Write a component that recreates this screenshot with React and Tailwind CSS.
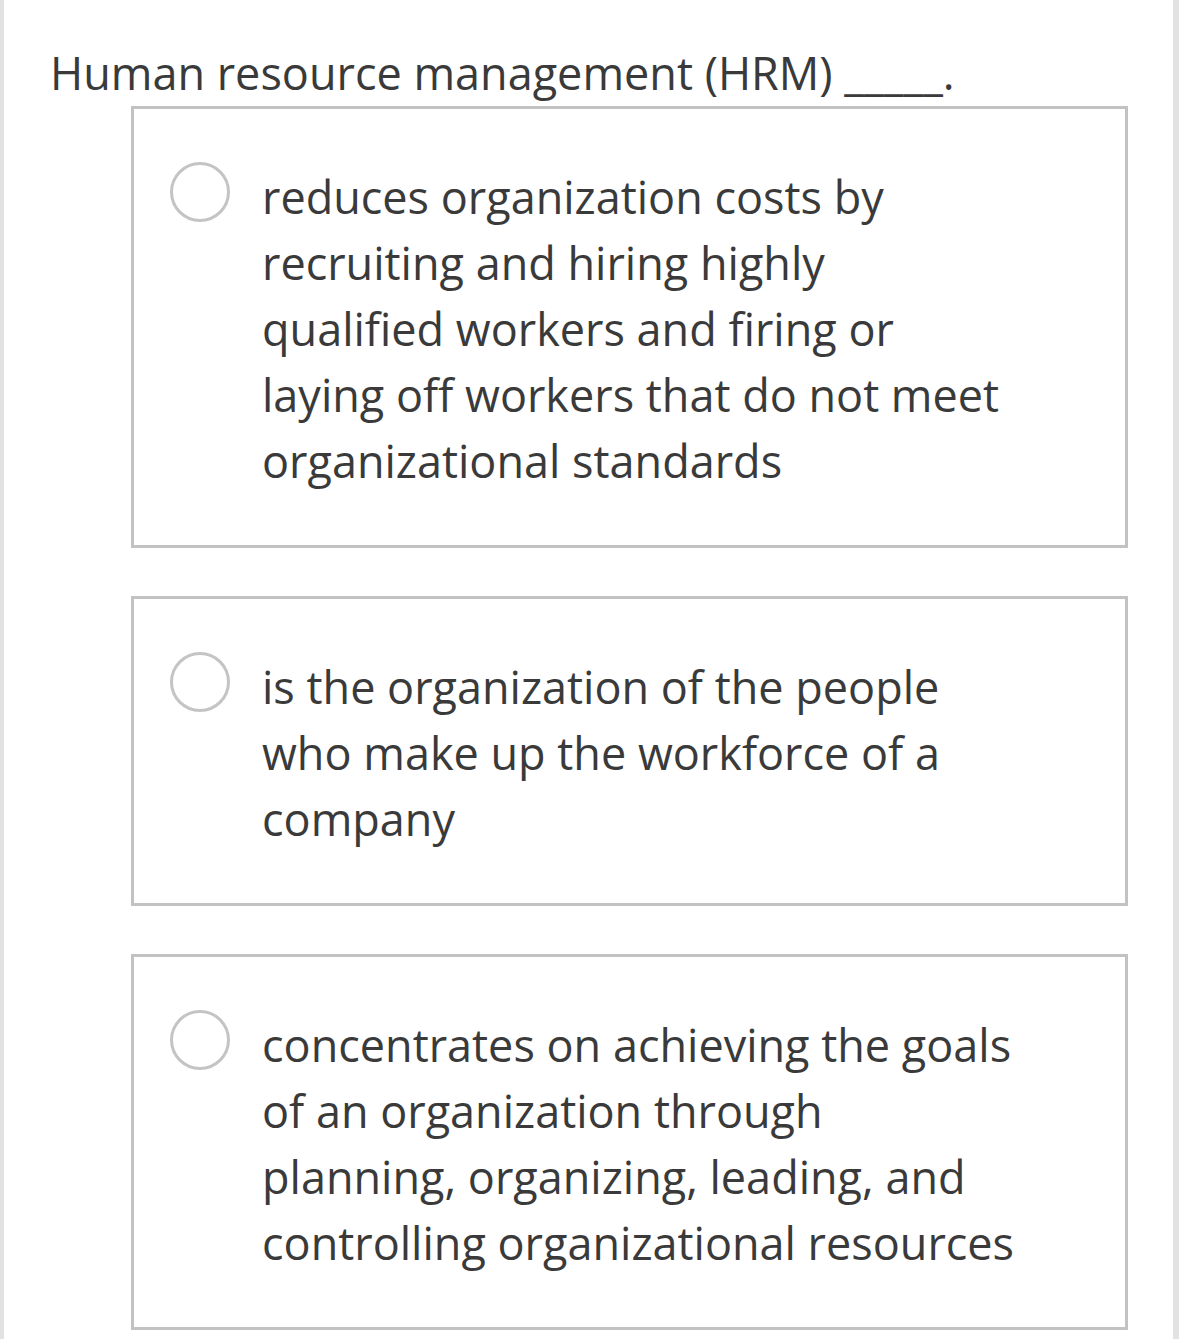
const OPTIONS = [
  [
    'reduces organization costs by',
    'recruiting and hiring highly',
    'qualified workers and firing or',
    'laying off workers that do not meet',
    'organizational standards',
  ],
  ['is the organization of the people', 'who make up the workforce of a', 'company'],
  [
    'concentrates on achieving the goals',
    'of an organization through',
    'planning, organizing, leading, and',
    'controlling organizational resources',
  ],
];

const Option = ({ lines }) => (
  <label className="flex items-start border-[3px] border-[#c2c2c2] bg-white pt-[53px] pb-[51px] pl-[36px]">
    <span className="block w-[60px] h-[60px] shrink-0 rounded-full border-[3px] border-[#c4c4c4]" />
    <span className="mt-[2px] ml-[32px] w-[800px] text-[45px] leading-[66px] text-[#3a3a3a]">
      {lines.map((l) => (
        <span key={l} className="block whitespace-nowrap">
          {l}
        </span>
      ))}
    </span>
  </label>
);

export default function App() {
  return (
    <div
      className="min-h-[1339px] bg-white border-l-4 border-l-[#e2e2e2] border-r-[6px] border-r-[#e2e2e2]"
      style={{ fontFamily: '"Open Sans", sans-serif' }}
    >
      <div className="pt-[40px] pl-[46px]">
        <p className="text-[45px] leading-[66px] text-[#3a3a3a]">
          Human resource management (HRM) _____.
        </p>
        <div className="ml-[81px] w-[997px] flex flex-col gap-[48px]">
          {OPTIONS.map((o) => (
            <Option key={o[0]} lines={o} />
          ))}
        </div>
      </div>
    </div>
  );
}
